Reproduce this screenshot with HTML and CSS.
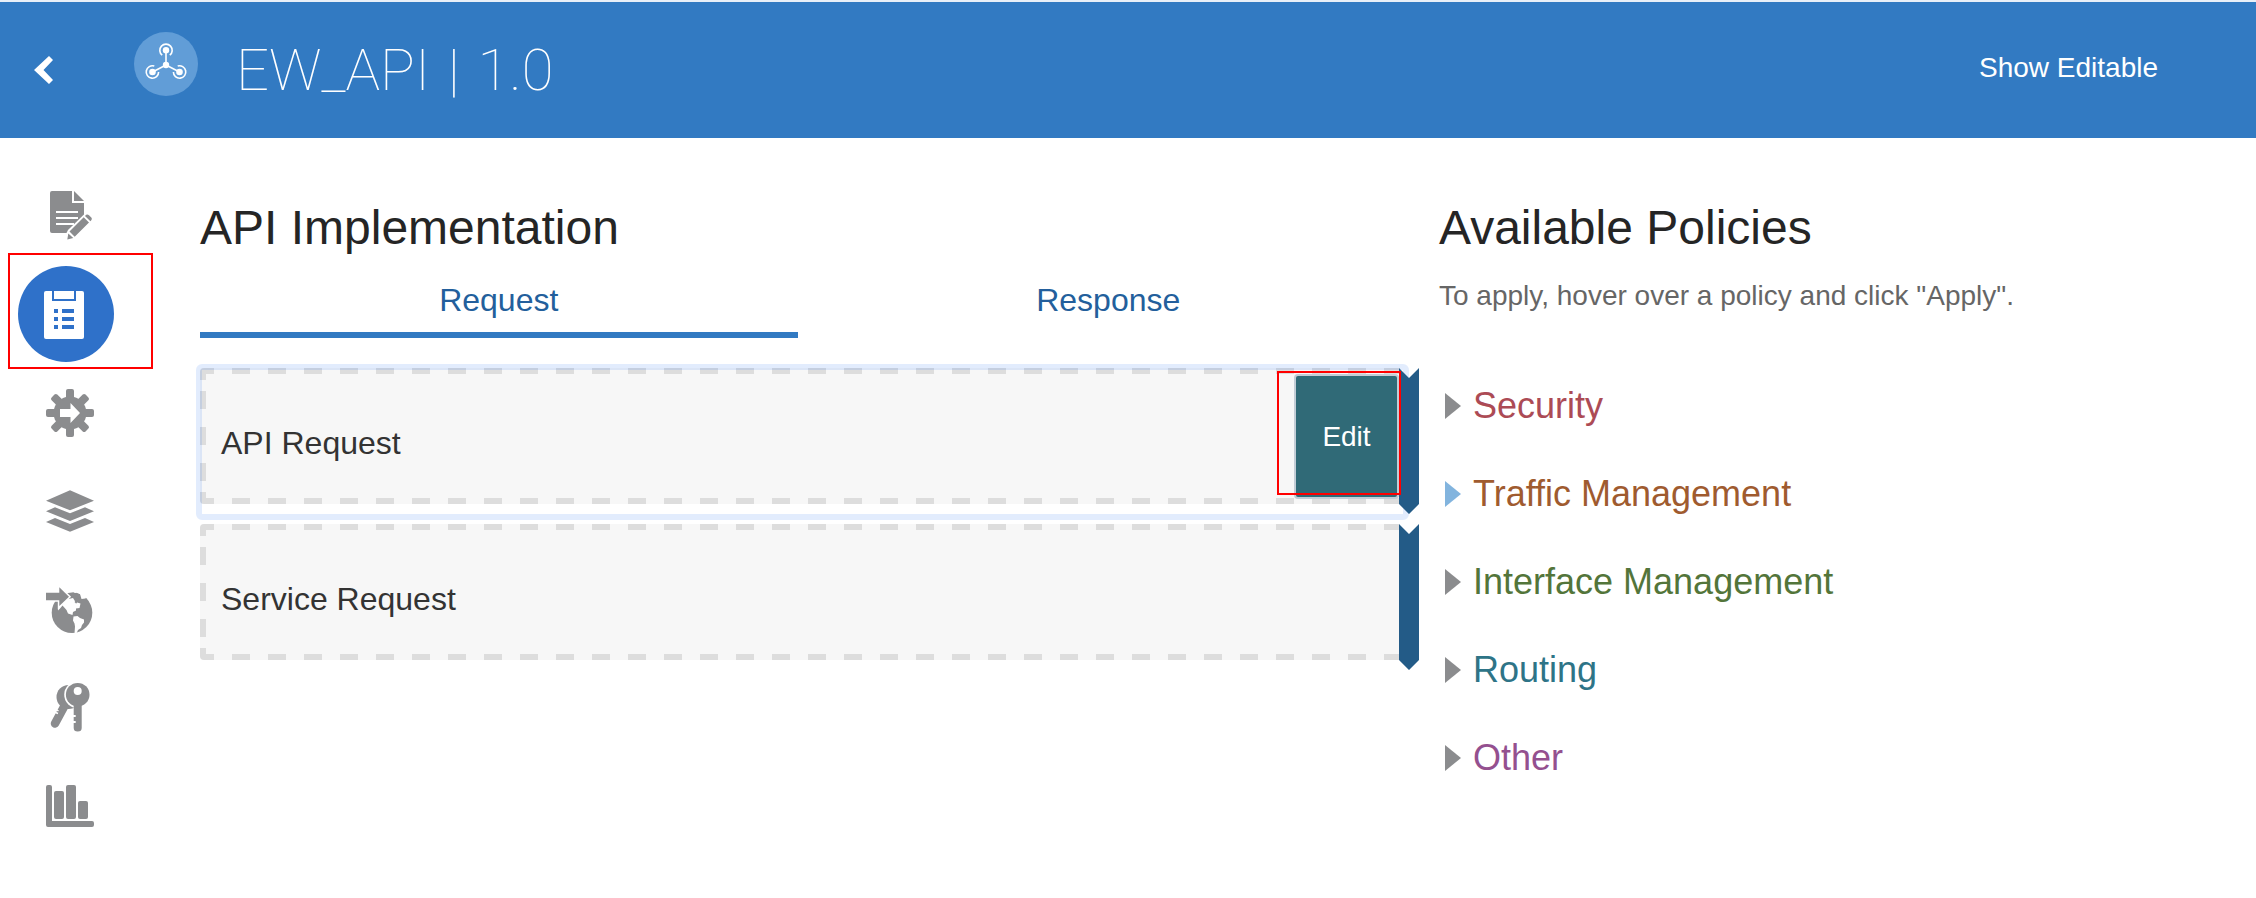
FILE: index.html
```html
<!DOCTYPE html>
<html lang="en">
<head>
<meta charset="utf-8">
<title>EW_API | 1.0</title>
<link rel="stylesheet" href="styles.css">
</head>
<body>
<header class="topbar">
  <button class="back" type="button" aria-label="Back">
    <svg width="20" height="28" viewBox="0 0 20 28"><path d="M0 14 15 0l4 4L9.500 14 19 24l-4 4z" fill="#fff"/></svg>
  </button>
  <svg class="logo" width="64" height="64" viewBox="0 0 64 64">
    <circle cx="32" cy="32" r="32" fill="#619dd7"/>
    <g fill="none" stroke="#fff" stroke-width="1.600">
      <path d="M32 33V18M32 33 18.500 40M32 33l13.500 7"/>
      <path d="M28.200 23.200a6.200 6.200 0 1 1 7.600 0"/>
      <path d="M24.600 40a6.200 6.200 0 1 1-4.300-5.900"/>
      <path d="M39.400 40a6.200 6.200 0 1 0 4.300-5.900"/>
    </g>
    <g fill="#fff"><circle cx="32" cy="33" r="3.200"/><circle cx="32" cy="18.200" r="3.200"/><circle cx="18.500" cy="40" r="3.300"/><circle cx="45.500" cy="40" r="3.300"/></g>
  </svg>
  <h1 class="api-name"><span>EW_API</span> <span>|</span> <span>1.0</span></h1>
  <button class="show-editable" type="button">Show Editable</button>
</header>
<div class="page">
  <nav class="rail" aria-label="API sections">
    <a class="rail-item" href="#overview" aria-label="Overview">
      <svg class="icon" viewBox="0 0 56 56">
        <path d="M10 3h20v12h12v30H10a2 2 0 0 1-2-2V5a2 2 0 0 1 2-2z"/><path d="M32 3v10h10z"/>
        <path d="M14 24h22M14 30h22M14 36h18" stroke="#fff" stroke-width="2.200"/>
        <path d="M26 42 44 24.500l8 7V46H24z" fill="#fff"/>
        <path d="M26.300 45.500l-1 6 6-1.500zM27.500 43.600 41.700 29.200l5.300 5.200-14.300 14.300zM43 27.900c1.500-1.500 2.500-1.900 4-.6l2.300 2.200c1 1.200.6 2.200-.9 3.700z"/>
      </svg>
    </a>
    <a class="rail-item active" href="#implementation" aria-label="API Implementation" aria-current="page">
      <svg class="icon" viewBox="0 0 56 56">
        <rect x="6" y="5" width="40" height="48" rx="2"/>
        <path d="M15 5v9h22V5" class="clip-lines"/>
        <path d="M16 25h4M24 25h12M16 33h4M24 33h12M16 41h4M24 41h12" class="list-lines"/>
      </svg>
      <span class="callout callout-nav"></span>
    </a>
    <a class="rail-item" href="#deployments" aria-label="Deployments">
      <svg class="icon" viewBox="0 0 56 56">
        <circle cx="28" cy="29" r="16.500"/>
        <rect x="24" y="5" width="8" height="48" rx="2"/>
        <rect x="24" y="5" width="8" height="48" rx="2" transform="rotate(45 28 29)"/>
        <rect x="24" y="5" width="8" height="48" rx="2" transform="rotate(90 28 29)"/>
        <rect x="24" y="5" width="8" height="48" rx="2" transform="rotate(135 28 29)"/>
        <path d="M18 25h10.500v-6L38 29l-9.500 10v-6H18z" fill="#fff"/>
      </svg>
    </a>
    <a class="rail-item" href="#publication" aria-label="Publication">
      <svg class="icon" viewBox="0 0 56 56">
        <path d="M4 18.700 28 8.300l24 10.400-24 9.600zM4 29.300l9-4 15 6 15-6 9 4L28 39zM4 40l9-4 15 6 15-6 9 4-24 9.700z"/>
      </svg>
    </a>
    <a class="rail-item" href="#endpoints" aria-label="Endpoints">
      <svg class="icon" viewBox="0 0 56 56">
        <circle cx="30" cy="32.700" r="20.300"/>
        <path d="M12 9h12l8 2 6 3 1.500 5 4-.5 1-2L40 9H24z" fill="#fff"/>
        <path d="M28.500 13.500l3-1.300 1 1.700 2-1.200 3.500 1.800-.5 3 1.500 1-1 1.500-2.500-1.500-2.500 1-1.500-1.500 1.500-1.500-2-.5-1.500 1z"/>
        <path d="M16 24v6.500l2-2 2.500-3 4 4.500 1.500 3.500 4.500 1.500.5-3 3-1.500v-2l3.500-.5 1-4.500-5-1.500-2.500-4-4.500 1L24 20z" fill="#fff"/>
        <path d="M32.500 22l2-2 .5 3-1 .5z"/>
        <path d="M31.500 36.500l4-.5 2.500 2 4 1.500 0 3-2 2.500-1 3-3 2-1.500 3.500h-2l.5-7-.5-3-1.500-3z" fill="#fff"/>
        <path d="M4 12.700h13.300V7.300L27 16.700 17.300 26v-5.700H4z" class="cut-out"/>
      </svg>
    </a>
    <a class="rail-item" href="#grants" aria-label="Grants">
      <svg class="icon" viewBox="0 0 56 56">
        <circle cx="26.500" cy="19" r="12"/>
        <path d="M23 27 13 45.500" stroke="#8b8c8e" stroke-width="8.500" stroke-linecap="round"/>
        <path d="M13.500 34.500l2.500 1M15 32l1.500 1" stroke="#fff" stroke-width="1.500"/>
        <circle cx="35.700" cy="16.700" r="13.500" fill="#fff"/>
        <circle cx="35.700" cy="16.700" r="11.800"/>
        <path d="M31.700 26h8v24a4 3.500 0 0 1-8 0v-5h2v-2h-2v-4h2v-2h-2z"/>
        <circle cx="35.700" cy="13" r="4" fill="#fff"/>
      </svg>
    </a>
    <a class="rail-item" href="#analytics" aria-label="Analytics">
      <svg class="icon" viewBox="0 0 56 56">
        <path d="M6 9h2a2 2 0 0 1 2 2v34h40a2 2 0 0 1 2 2v2a2 2 0 0 1-2 2H6a2 2 0 0 1-2-2V11a2 2 0 0 1 2-2z"/>
        <rect x="12" y="15" width="10" height="28" rx="2"/><rect x="24" y="9" width="10" height="34" rx="2"/><rect x="36" y="25" width="10" height="18" rx="2"/>
      </svg>
    </a>
  </nav>
  <main class="implementation">
    <h2 class="heading">API Implementation</h2>
    <div class="tabs" role="tablist">
      <button class="tab selected" type="button" role="tab" aria-selected="true">Request</button>
      <button class="tab" type="button" role="tab" aria-selected="false">Response</button>
    </div>
    <div class="flow">
      <section class="step focused">
        <div class="step-body">
          <span class="step-name">API Request</span>
          <button class="edit" type="button">Edit</button>
        </div>
        <span class="step-arrow"></span>
        <span class="callout callout-edit"></span>
      </section>
      <section class="step">
        <div class="step-body"><span class="step-name">Service Request</span></div>
        <span class="step-arrow"></span>
      </section>
    </div>
  </main>
  <aside class="policies">
    <h2 class="heading">Available Policies</h2>
    <p class="hint">To apply, hover over a policy and click "Apply".</p>
    <div class="policy-list">
      <button class="policy security" type="button"><span class="caret"></span>Security</button>
      <button class="policy traffic" type="button"><span class="caret hover"></span>Traffic Management</button>
      <button class="policy interface" type="button"><span class="caret"></span>Interface Management</button>
      <button class="policy routing" type="button"><span class="caret"></span>Routing</button>
      <button class="policy other" type="button"><span class="caret"></span>Other</button>
    </div>
  </aside>
</div>
</body>
</html>
```
FILE: styles.css
```css
* { box-sizing: border-box; }
body {
  margin: 0;
  background: #fff;
  color: #252525;
  font-family: "Liberation Sans", Arial, sans-serif;
}
button {
  margin: 0;
  padding: 0;
  border: 0;
  background: none;
  color: inherit;
  font: inherit;
}
svg { display: block; }

.topbar {
  display: flex;
  align-items: center;
  min-height: 138px;
  padding: 0 98px 0 34px;
  border-top: 2px solid #e8eff8;
  background: #327ac2;
  color: #fff;
}
.logo { margin: 0 38px 12px 80px; }
.api-name {
  display: flex;
  flex: 1;
  gap: 18px;
  margin: 0;
  font: 100 58px/64px Roboto, "Liberation Sans", sans-serif;
}
.show-editable {
  margin-bottom: 4px;
  font-size: 28px;
  line-height: 36px;
}

.page {
  display: grid;
  grid-template-columns: 200px minmax(0, 1219fr) 20px minmax(0, 817fr);
}
.rail {
  display: flex;
  flex-direction: column;
  gap: 2px;
  padding: 30px 0 0 18px;
}
.rail-item {
  display: flex;
  align-items: center;
  justify-content: center;
  width: 104px;
  height: 96px;
}
.rail-item.active {
  position: relative;
  width: 96px;
  border-radius: 50%;
  background: #2f71c9;
}
.icon { width: 56px; height: 56px; fill: #8b8c8e; }
.active .icon { width: 56px; fill: #fff; }
.clip-lines { fill: none; stroke: #2f71c9; stroke-width: 2; }
.list-lines { fill: none; stroke: #2f71c9; stroke-width: 4; }
.cut-out { stroke: #fff; stroke-width: 3; paint-order: stroke; }

.callout {
  position: absolute;
  border: 2px solid #f00;
  pointer-events: none;
}
.callout-nav { top: -13px; left: -10px; width: 145px; height: 116px; }
.callout-edit { top: 3px; right: 18px; width: 124px; height: 124px; z-index: 3; }

.implementation { grid-column: 2; padding-top: 62px; }
.policies { grid-column: 4; padding-top: 62px; }
.heading {
  margin: 0;
  font-size: 48px;
  font-weight: 400;
  line-height: 56px;
}
.tabs {
  display: grid;
  grid-template-columns: 1fr 1fr;
  column-gap: 12px;
  margin-top: 24px;
  padding-right: 12px;
}
.tab {
  padding-bottom: 12px;
  border-bottom: 6px solid transparent;
  color: #235f9c;
  font-size: 32px;
  line-height: 40px;
}
.tab.selected { border-bottom-color: #327ac2; }

.flow {
  display: flex;
  flex-direction: column;
  gap: 10px;
  margin-top: 30px;
}
.step { position: relative; display: flex; }
.step-body {
  display: flex;
  flex: 1;
  align-items: flex-start;
  justify-content: space-between;
  min-height: 136px;
  margin-bottom: 10px;
  border-radius: 4px 0 0 4px;
  background:
    linear-gradient(#ddd, #ddd) left top / 6px 12px no-repeat,
    linear-gradient(#ddd, #ddd) left bottom / 6px 12px no-repeat,
    linear-gradient(90deg, #ddd 18px, transparent 18px) -4px top / 36px 6px repeat-x,
    linear-gradient(90deg, #ddd 18px, transparent 18px) -4px bottom / 36px 6px repeat-x,
    linear-gradient(transparent 9px, #ddd 9px 27px, transparent 27px) left center / 6px 36px repeat-y,
    #f7f7f7;
}
.step-name {
  padding: 55px 21px 0;
  color: #333;
  font-size: 32px;
  line-height: 40px;
}
.step-arrow {
  z-index: 2;
  width: 20px;
  background: #235b87;
  clip-path: polygon(0 0, 50% 10px, 100% 0, 100% calc(100% - 10px), 50% 100%, 0 calc(100% - 10px));
}
.focused::after {
  content: "";
  position: absolute;
  inset: -4px 10px -6px -4px;
  border: 6px solid rgba(50, 120, 240, 0.14);
  border-radius: 6px;
  pointer-events: none;
}
.edit {
  width: 105px;
  height: 125px;
  margin-top: 6px;
  border: 2px solid #c3cdd6;
  border-radius: 4px;
  background: #306a77;
  color: #fff;
  font-size: 28px;
}

.hint {
  margin: 22px 0 0;
  color: #666;
  font-size: 28px;
  line-height: 36px;
}
.policy-list {
  display: flex;
  flex-direction: column;
  align-items: flex-start;
  gap: 44px;
  margin-top: 70px;
  padding-left: 6px;
}
.policy {
  display: flex;
  align-items: center;
  gap: 12px;
  font-size: 36px;
  line-height: 44px;
}
.caret {
  width: 16px;
  height: 26px;
  background: #8b8c8e;
  clip-path: polygon(0 0, 100% 50%, 0 100%);
}
.caret.hover { background: #82b4de; }
.security { color: #ac4b55; }
.traffic { color: #9f5b2f; }
.interface { color: #53753a; }
.routing { color: #2e7487; }
.other { color: #94508f; }
```
